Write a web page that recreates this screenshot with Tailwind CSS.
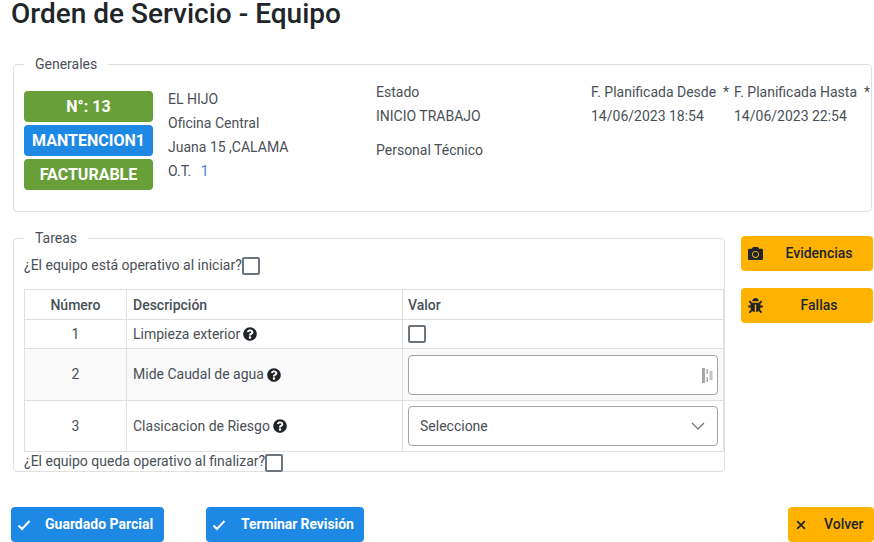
<!DOCTYPE html>
<html lang="es">
<head>
<meta charset="utf-8">
<title>Orden de Servicio - Equipo</title>
<script src="https://cdn.jsdelivr.net/npm/@tailwindcss/browser@4"></script>
</head>
<body class="bg-white font-['Roboto',sans-serif] text-[14px] text-[#495057] overflow-hidden h-[542px] w-[874px]">
<div class="h-[542px] flex flex-col">
  <h1 class="ml-[11px] h-[28px] leading-[28px] text-[28px] font-medium text-[#212529]">Orden de Servicio - Equipo</h1>

  <fieldset class="ml-[13px] mt-[26px] w-[859px] min-w-0 h-[158px] border border-[#e0e0e0] rounded px-[10px]">
    <legend class="px-[11px] h-[20px] leading-[20px]">Generales</legend>
    <div class="grid grid-cols-[144px_208px_215px_143px_137px] pt-[17px]">
      <div class="flex flex-col gap-[3px] w-[129px]">
        <div class="h-[31px] rounded bg-[#689f38] text-white font-bold text-[16px] flex items-center justify-center">N°: 13</div>
        <div class="h-[31px] rounded bg-[#1e88e5] text-white font-bold text-[16px] flex items-center justify-center">MANTENCION1</div>
        <div class="h-[31px] rounded bg-[#689f38] text-white font-bold text-[16px] flex items-center justify-center">FACTURABLE</div>
      </div>
      <div class="flex flex-col leading-[24px] -mt-[4px]">
        <div>EL HIJO</div>
        <div>Oficina Central</div>
        <div>Juana 15 ,CALAMA</div>
        <div>O.T. <span class="ml-[6px] text-[#4a7fc9]">1</span></div>
      </div>
      <div class="flex flex-col leading-[24px] -mt-[11px]">
        <div>Estado</div>
        <div>INICIO TRABAJO</div>
        <div class="mt-[10px]">Personal Técnico</div>
      </div>
      <div class="flex flex-col leading-[24px] -mt-[11px]">
        <div class="whitespace-nowrap">F. Planificada Desde&nbsp; *</div>
        <div>14/06/2023 18:54</div>
      </div>
      <div class="flex flex-col leading-[24px] -mt-[11px]">
        <div class="whitespace-nowrap">F. Planificada Hasta&nbsp; *</div>
        <div>14/06/2023 22:54</div>
      </div>
    </div>
  </fieldset>

  <div class="flex items-start ml-[13px] mt-[16px] gap-[16px]">
    <fieldset class="w-[712px] min-w-0 h-[244px] border border-[#e0e0e0] rounded pl-[10px]">
      <legend class="ml-0 px-[11px] h-[20px] leading-[20px]">Tareas</legend>
      <div class="flex items-start h-[41px] pt-[7px]">
        <span class="leading-[20px]">¿El equipo está operativo al iniciar?</span>
        <span class="mt-[2px] w-[18px] h-[18px] border-2 border-[#6c757d] rounded-[2px] bg-white"></span>
      </div>
      <table class="w-[700px] table-fixed border-collapse border border-[#e0e0e0]">
        <colgroup><col class="w-[102px]"><col class="w-[276px]"><col></colgroup>
        <thead>
          <tr class="h-[30px] font-medium">
            <th class="border border-[#e0e0e0] font-medium text-center pt-[2px]">Número</th>
            <th class="border border-[#e0e0e0] font-medium text-left pl-[6px] pt-[2px]">Descripción</th>
            <th class="border border-[#e0e0e0] font-medium text-left pl-[5px] pt-[2px]">Valor</th>
          </tr>
        </thead>
        <tbody>
          <tr class="h-[29px]">
            <td class="border border-[#e0e0e0] text-center">1</td>
            <td class="border border-[#e0e0e0] pl-[6px]"><span class="flex items-center gap-[3px]">Limpieza exterior
              <svg viewBox="0 0 512 512" class="w-[14px] h-[14px] fill-[#212529]"><path d="M504 256c0 136.997-111.043 248-248 248S8 392.997 8 256C8 119.083 119.043 8 256 8s248 111.083 248 248zM262.655 90c-54.497 0-89.255 22.957-116.549 63.758-3.536 5.286-2.353 12.415 2.715 16.258l34.699 26.31c5.205 3.947 12.621 3.008 16.665-2.122 17.864-22.658 30.113-35.797 57.303-35.797 20.429 0 45.698 13.148 45.698 32.958 0 14.976-12.363 22.667-32.534 33.976C247.128 238.528 216 254.941 216 296v4c0 6.627 5.373 12 12 12h56c6.627 0 12-5.373 12-12v-1.333c0-28.462 83.186-29.647 83.186-106.667 0-58.002-60.165-102-116.531-102zM256 338c-25.365 0-46 20.635-46 46 0 25.364 20.635 46 46 46s46-20.636 46-46c0-25.365-20.635-46-46-46z"/></svg></span></td>
            <td class="border border-[#e0e0e0] pl-[5px]"><span class="block w-[18px] h-[18px] border-2 border-[#6c757d] rounded-[2px] bg-white"></span></td>
          </tr>
          <tr class="h-[52px] bg-[#f9f9f9]">
            <td class="border border-[#e0e0e0] text-center">2</td>
            <td class="border border-[#e0e0e0] pl-[6px]"><span class="flex items-center gap-[3px]">Mide Caudal de agua
              <svg viewBox="0 0 512 512" class="w-[14px] h-[14px] fill-[#212529]"><path d="M504 256c0 136.997-111.043 248-248 248S8 392.997 8 256C8 119.083 119.043 8 256 8s248 111.083 248 248zM262.655 90c-54.497 0-89.255 22.957-116.549 63.758-3.536 5.286-2.353 12.415 2.715 16.258l34.699 26.31c5.205 3.947 12.621 3.008 16.665-2.122 17.864-22.658 30.113-35.797 57.303-35.797 20.429 0 45.698 13.148 45.698 32.958 0 14.976-12.363 22.667-32.534 33.976C247.128 238.528 216 254.941 216 296v4c0 6.627 5.373 12 12 12h56c6.627 0 12-5.373 12-12v-1.333c0-28.462 83.186-29.647 83.186-106.667 0-58.002-60.165-102-116.531-102zM256 338c-25.365 0-46 20.635-46 46 0 25.364 20.635 46 46 46s46-20.636 46-46c0-25.365-20.635-46-46-46z"/></svg></span></td>
            <td class="border border-[#e0e0e0] pl-[5px]">
              <div class="relative w-[310px] h-[40px] bg-white border border-[#a0a4a8] rounded-[4px]">
                <svg viewBox="0 0 11 15" class="absolute right-[4px] top-[12px] w-[11px] h-[15px]"><rect x="0" y="0" width="3" height="15" fill="#a6a6a6"/><rect x="4.5" y="1" width="1.5" height="5" fill="#a6a6a6"/><rect x="4.5" y="9" width="1.5" height="5" fill="#a6a6a6"/><rect x="7.5" y="3" width="3" height="9" fill="#c4c4c4"/></svg>
              </div>
            </td>
          </tr>
          <tr class="h-[51px]">
            <td class="border border-[#e0e0e0] text-center">3</td>
            <td class="border border-[#e0e0e0] pl-[6px]"><span class="flex items-center gap-[3px]">Clasicacion de Riesgo
              <svg viewBox="0 0 512 512" class="w-[14px] h-[14px] fill-[#212529]"><path d="M504 256c0 136.997-111.043 248-248 248S8 392.997 8 256C8 119.083 119.043 8 256 8s248 111.083 248 248zM262.655 90c-54.497 0-89.255 22.957-116.549 63.758-3.536 5.286-2.353 12.415 2.715 16.258l34.699 26.31c5.205 3.947 12.621 3.008 16.665-2.122 17.864-22.658 30.113-35.797 57.303-35.797 20.429 0 45.698 13.148 45.698 32.958 0 14.976-12.363 22.667-32.534 33.976C247.128 238.528 216 254.941 216 296v4c0 6.627 5.373 12 12 12h56c6.627 0 12-5.373 12-12v-1.333c0-28.462 83.186-29.647 83.186-106.667 0-58.002-60.165-102-116.531-102zM256 338c-25.365 0-46 20.635-46 46 0 25.364 20.635 46 46 46s46-20.636 46-46c0-25.365-20.635-46-46-46z"/></svg></span></td>
            <td class="border border-[#e0e0e0] pl-[5px]">
              <div class="flex items-center justify-between w-[310px] h-[40px] bg-white border border-[#a0a4a8] rounded-[4px] pl-[11px] pr-[12px]">
                <span>Seleccione</span>
                <svg viewBox="0 0 14 8" class="w-[14px] h-[8px] fill-none stroke-[#6c757d] stroke-[1.2]"><path d="M1 1l6 6 6-6"/></svg>
              </div>
            </td>
          </tr>
        </tbody>
      </table>
      <div class="flex items-start h-[21px]">
        <span class="leading-[18px]">¿El equipo queda operativo al finalizar?</span>
        <span class="mt-[2px] w-[18px] h-[18px] border-2 border-[#6c757d] rounded-[2px] bg-white"></span>
      </div>
    </fieldset>

    <div class="flex flex-col gap-[17px] mt-[8px] w-[132px]">
      <button class="h-[35px] rounded bg-[#ffb300] text-[#212529] font-medium flex items-center pl-[7px] pr-[8px]">
        <svg viewBox="0 0 512 512" class="w-[15px] h-[15px] fill-[#212529] shrink-0"><path d="M512 144v288c0 26.5-21.5 48-48 48H48c-26.5 0-48-21.5-48-48V144c0-26.5 21.5-48 48-48h88l12.3-32.9c7-18.7 24.9-31.1 44.9-31.1h125.5c20 0 37.9 12.4 44.9 31.1L376 96h88c26.5 0 48 21.5 48 48zM376 288c0-66.2-53.8-120-120-120s-120 53.8-120 120 53.8 120 120 120 120-53.8 120-120zm-32 0c0 48.5-39.5 88-88 88s-88-39.5-88-88 39.5-88 88-88 88 39.5 88 88z"/></svg>
        <span class="flex-1 text-center pl-[10px]">Evidencias</span>
      </button>
      <button class="h-[35px] rounded bg-[#ffb300] text-[#212529] font-medium flex items-center pl-[7px] pr-[8px]">
        <svg viewBox="0 0 512 512" class="w-[15px] h-[15px] fill-[#212529] shrink-0"><path d="M511.988 288.9c-.478 17.43-15.217 31.1-32.653 31.1H424v16c0 21.864-4.882 42.584-13.6 61.145l60.228 60.228c12.496 12.497 12.496 32.758 0 45.255-12.498 12.497-32.759 12.496-45.256 0l-54.736-54.736C345.886 467.965 314.351 480 280 480V236c0-6.627-5.373-12-12-12h-24c-6.627 0-12 5.373-12 12v244c-34.351 0-65.886-12.035-90.636-32.108l-54.736 54.736c-12.498 12.497-32.759 12.496-45.256 0-12.496-12.497-12.496-32.758 0-45.255l60.228-60.228C92.882 378.584 88 357.864 88 336v-16H32.666C15.23 320 .491 306.33.013 288.9-.484 270.816 14.028 256 32 256h56v-58.745l-46.628-46.628c-12.496-12.497-12.496-32.758 0-45.255 12.498-12.497 32.758-12.497 45.256 0L141.255 160h229.489l54.627-54.627c12.498-12.497 32.758-12.497 45.256 0 12.496 12.497 12.496 32.758 0 45.255L424 197.255V256h56c17.972 0 32.484 14.816 31.988 32.9zM257 0c-61.856 0-112 50.144-112 112h224C369 50.144 318.856 0 257 0z"/></svg>
        <span class="flex-1 text-center pl-[10px]">Fallas</span>
      </button>
    </div>
  </div>

  <div class="flex ml-[11px] mt-[35px] gap-[42px]">
    <button class="h-[35px] w-[153px] rounded bg-[#1e88e5] text-white font-bold flex items-center pl-[6px]">
      <svg viewBox="0 0 14 14" class="w-[14px] h-[14px] fill-none stroke-white stroke-2"><path d="M1.5 7.5l3.5 3.5 7.5-8"/></svg>
      <span class="ml-[14px]">Guardado Parcial</span>
    </button>
    <button class="h-[35px] w-[158px] rounded bg-[#1e88e5] text-white font-bold flex items-center pl-[6px]">
      <svg viewBox="0 0 14 14" class="w-[14px] h-[14px] fill-none stroke-white stroke-2"><path d="M1.5 7.5l3.5 3.5 7.5-8"/></svg>
      <span class="ml-[15px] tracking-[-0.1px]">Terminar Revisión</span>
    </button>
    <button class="h-[35px] w-[86px] ml-auto rounded bg-[#ffb300] text-[#212529] font-medium flex items-center pl-[7px]">
      <svg viewBox="0 0 14 14" class="w-[12px] h-[12px] fill-none stroke-[#212529] stroke-2"><path d="M2.5 2.5l9 9M11.5 2.5l-9 9"/></svg>
      <span class="ml-[17px]">Volver</span>
    </button>
  </div>
</div>
</body>
</html>
